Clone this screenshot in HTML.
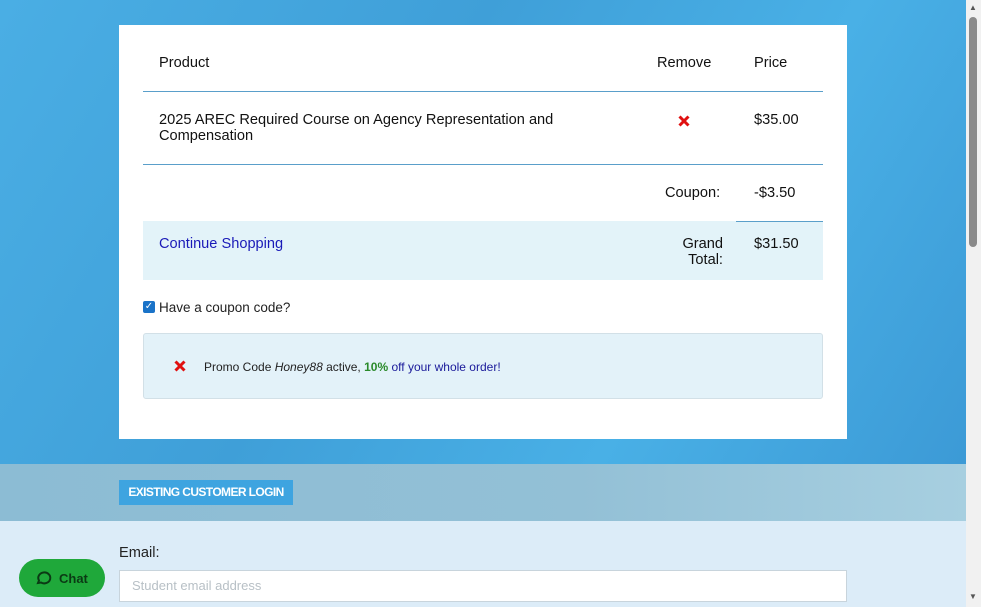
<!DOCTYPE html><html><head><style>
body{margin:0;width:981px;height:607px;overflow:hidden;font-family:"Liberation Sans",sans-serif;position:relative;background:#46ade3}
.bg{position:absolute;left:0;top:0;width:966px;height:464px;background:linear-gradient(120deg,#4aaee4,#3f9fd8 40%,#49b0e6 70%,#3c9ad6)}
.card{position:absolute;left:119px;top:25px;width:728px;height:414px;background:#fff}
.t{position:absolute;font-size:14.6px;color:#111}
.line{position:absolute;height:1px;background:#5a9fca}
.band{position:absolute;left:0;top:464px;width:966px;height:57px;background:linear-gradient(90deg,#8cbcd4,#93c0d6 60%,#a7cfe0)}
.low{position:absolute;left:0;top:521px;width:966px;height:86px;background:#dcecf8}
.sb{position:absolute;left:966px;top:0;width:15px;height:607px;background:#f1f1f1}
</style></head><body>
<div class="bg"></div>
<div class="card">
<div class="t" style="left:40px;top:30px">Product</div>
<div class="t" style="left:538px;top:30px">Remove</div>
<div class="t" style="left:635px;top:30px">Price</div>
<div class="line" style="left:24px;top:66px;width:680px"></div>
<div class="t" style="left:40px;top:87px;line-height:16px">2025 AREC Required Course on Agency Representation and<br>Compensation</div>
<svg style="position:absolute;left:559px;top:90px" width="12" height="12" viewBox="0 0 12 12"><path d="M1.5 1.5L10.5 10.5M10.5 1.5L1.5 10.5" stroke="#e01010" stroke-width="3"/></svg>
<div class="t" style="left:635px;top:87px">$35.00</div>
<div class="line" style="left:24px;top:139px;width:680px"></div>
<div class="t" style="left:546px;top:160px">Coupon:</div>
<div class="t" style="left:635px;top:160px">-$3.50</div>
<div style="position:absolute;left:24px;top:196px;width:680px;height:59px;background:#e3f3f9"></div>
<div class="line" style="left:617px;top:196px;width:87px"></div>
<div class="t" style="left:40px;top:211px;color:#1a1ab8">Continue Shopping</div>
<div class="t" style="left:550px;top:211px;text-align:right;width:54px;line-height:16px">Grand<br>Total:</div>
<div class="t" style="left:635px;top:211px">$31.50</div>
<div style="position:absolute;left:24px;top:276px;width:12px;height:12px;background:#1a73c8;border-radius:2px;color:#fff;font-size:10px;line-height:12px;text-align:center">✓</div>
<div class="t" style="left:40px;top:275px;font-size:13.5px;color:#222">Have a coupon code?</div>
<div style="position:absolute;left:24px;top:308px;width:678px;height:64px;background:#e3f2f9;border:1px solid #d2e0e7;border-radius:3px"></div>
<svg style="position:absolute;left:55px;top:335px" width="12" height="12" viewBox="0 0 12 12"><path d="M1.5 1.5L10.5 10.5M10.5 1.5L1.5 10.5" stroke="#e01010" stroke-width="3"/></svg>
<div class="t" style="left:85px;top:335px;font-size:12px;color:#222">Promo Code <i>Honey88</i> active, <b style="color:#2a8a2a">10%</b> <span style="color:#1a1a9a">off your whole order!</span></div>
</div>
<div class="band"></div>
<div style="position:absolute;left:119px;top:480px;width:174px;height:25px;background:#3ea4e0;color:#fff;font-size:12px;font-weight:bold;line-height:25px;text-align:center;letter-spacing:-0.6px">EXISTING CUSTOMER LOGIN</div>
<div class="low"></div>
<div class="t" style="left:119px;top:545px;color:#222">Email:</div>
<div style="position:absolute;left:119px;top:570px;width:726px;height:30px;background:#fff;border:1px solid #c8d4dc"></div>
<div class="t" style="left:132px;top:578px;font-size:13px;color:#b8c0c6">Student email address</div>
<div style="position:absolute;left:19px;top:559px;width:86px;height:38px;background:#1fa83a;border-radius:19px"></div>
<svg style="position:absolute;left:35px;top:570px" width="17" height="17" viewBox="0 0 17 17"><path d="M3 13 L4 10.5 A6 5.5 0 1 1 6 12.5 Z" fill="none" stroke="#0b3a14" stroke-width="2"/></svg>
<div class="t" style="left:59px;top:571px;font-size:13px;font-weight:bold;color:#0b3a14">Chat</div>
<div class="sb"><div style="position:absolute;left:3px;top:17px;width:8px;height:230px;background:#8a8a8a;border-radius:4px"></div>
<div style="position:absolute;left:3px;top:3px;font-size:8px;color:#555">▲</div>
<div style="position:absolute;left:3px;top:592px;font-size:8px;color:#555">▼</div></div>
</body></html>
